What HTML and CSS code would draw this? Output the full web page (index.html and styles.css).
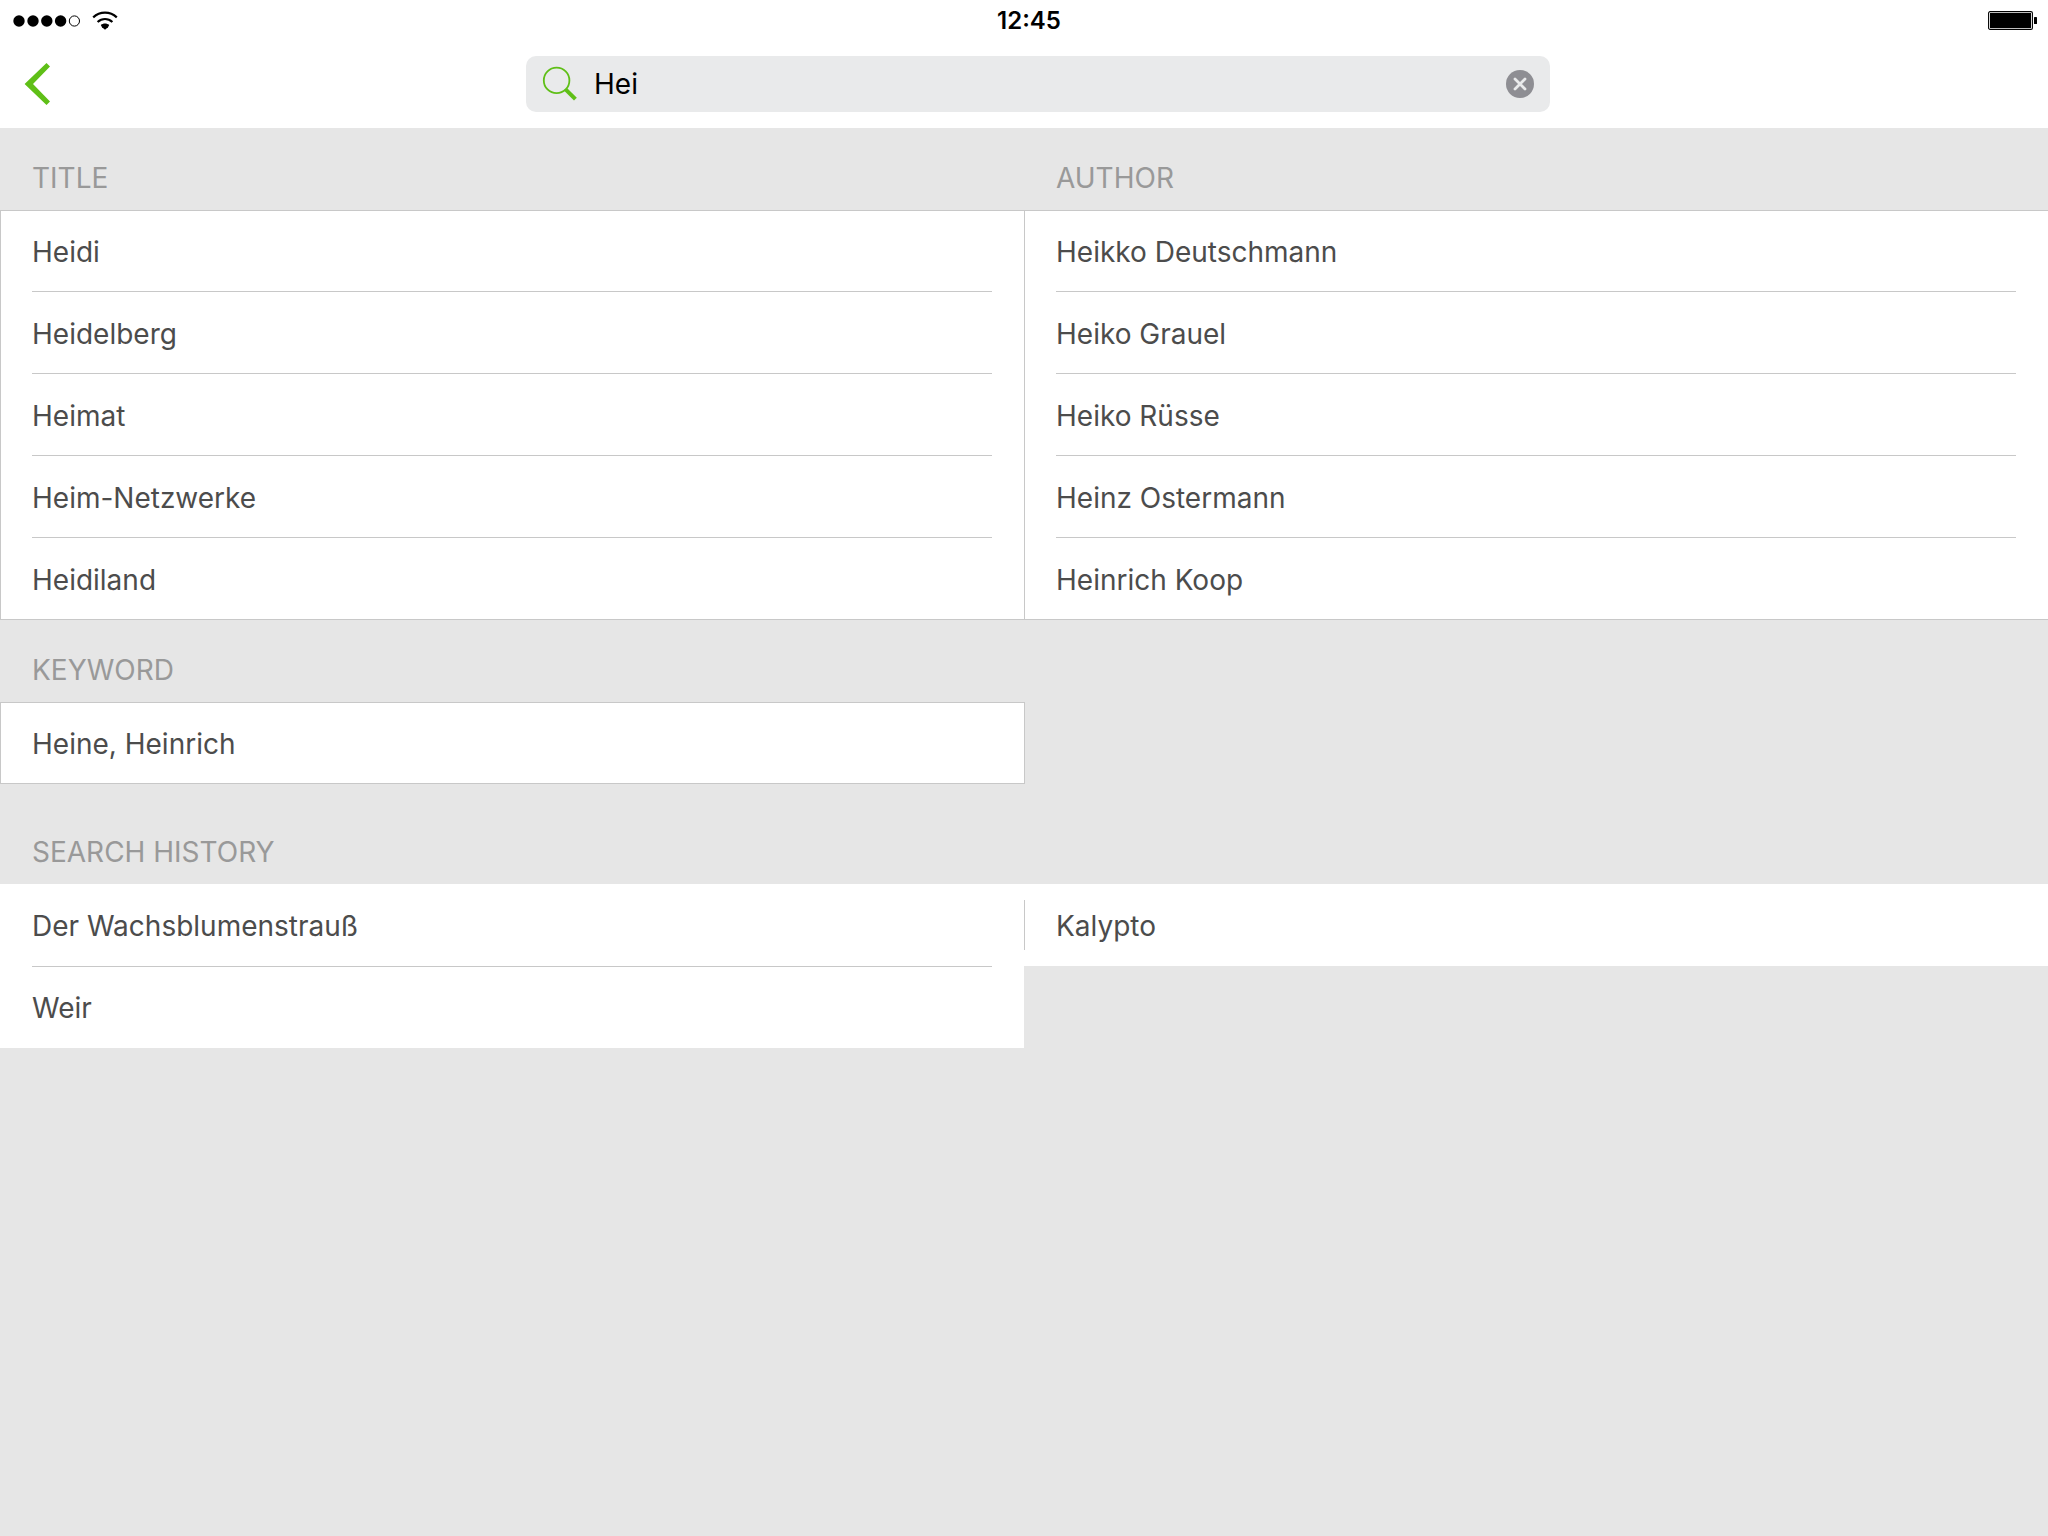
FILE: index.html
```html
<!DOCTYPE html>
<html lang="en">
<head>
<meta charset="utf-8">
<meta name="viewport" content="width=device-width, initial-scale=1">
<title>Search</title>
<link rel="stylesheet" href="styles.css">
</head>
<body>
<div class="status">
  <div class="status-left">
    <svg class="signal" width="70" height="12" viewBox="0 0 70 12" aria-label="Signal">
      <circle cx="7" cy="6" r="5.7"/><circle cx="21" cy="6" r="5.7"/><circle cx="34.8" cy="6" r="5.7"/><circle cx="48.6" cy="6" r="5.7"/>
      <circle cx="62.4" cy="6" r="5.1" fill="none" stroke="#000" stroke-width="1"/>
    </svg>
    <svg width="26" height="20" viewBox="0 0 26 20" aria-label="Wi-Fi">
      <path d="M1.2 6.4C8 .1 18 .1 24.8 6.4" fill="none" stroke="#000" stroke-width="2.2"/>
      <path d="M5.6 11C10 7 16 7 20.4 11" fill="none" stroke="#000" stroke-width="2.2"/>
      <path d="M8.8 14C11.2 12 14.8 12 17.2 14L16 16.2L13 18.8L10 16.2Z"/>
    </svg>
  </div>
  <time class="clock">12:45</time>
  <div class="status-right">
    <svg width="50" height="20" viewBox="0 0 50 20" aria-label="Battery">
      <rect x=".6" y=".6" width="43.8" height="17.8" rx="1.5" fill="#fff" stroke="#000" stroke-width="1.1"/>
      <rect x="2" y="2" width="41" height="15"/>
      <rect x="46" y="6" width="3" height="7" rx=".6"/>
    </svg>
  </div>
</div>
<header class="bar">
  <button class="back" type="button" aria-label="Back">
    <svg width="28" height="44" viewBox="0 0 28 44"><path d="M22.5 1L26 4.5L9 22L26 39.5L22.5 43L.6 22Z" fill="#5fbf17"/></svg>
  </button>
  <form class="search" role="search">
    <label for="query" aria-label="Search">
      <svg width="36" height="36" viewBox="0 0 36 36" fill="none" stroke="#5fbf17"><circle cx="14.6" cy="14.4" r="12.8" stroke-width="1.8"/><path d="M23.6 23.4L33.4 33.2" stroke-width="4"/></svg>
    </label>
    <input id="query" type="text" value="Hei">
    <button class="clear" type="button" aria-label="Clear">
      <svg width="28" height="28" viewBox="0 0 28 28"><circle cx="14" cy="14" r="14" fill="#8e8e93"/><path d="M9 9L19 19M19 9L9 19" stroke="#e9eaeb" stroke-width="2.8" stroke-linecap="round"/></svg>
    </button>
  </form>
</header>
<main>
  <div class="results">
    <section>
      <h2>TITLE</h2>
      <ul class="group">
        <li><a href="#">Heidi</a></li>
        <li><a href="#">Heidelberg</a></li>
        <li><a href="#">Heimat</a></li>
        <li><a href="#">Heim-Netzwerke</a></li>
        <li><a href="#">Heidiland</a></li>
      </ul>
    </section>
    <section>
      <h2>AUTHOR</h2>
      <ul class="group">
        <li><a href="#">Heikko Deutschmann</a></li>
        <li><a href="#">Heiko Grauel</a></li>
        <li><a href="#">Heiko Rüsse</a></li>
        <li><a href="#">Heinz Ostermann</a></li>
        <li><a href="#">Heinrich Koop</a></li>
      </ul>
    </section>
    <section>
      <h2>KEYWORD</h2>
      <ul class="group">
        <li><a href="#">Heine, Heinrich</a></li>
      </ul>
    </section>
  </div>
  <section class="recent">
    <h2>SEARCH HISTORY</h2>
    <ul class="history">
      <li><a href="#">Der Wachsblumenstrauß</a></li>
      <li><a href="#">Kalypto</a></li>
      <li><a href="#">Weir</a></li>
    </ul>
  </section>
</main>
</body>
</html>
```
FILE: styles.css
```css
* {
  box-sizing: border-box;
}

body {
  margin: 0;
  min-height: 100vh;
  overflow-x: hidden;
  background: #e6e6e6;
  color: #4c4c4c;
  font-family: Inter, "Liberation Sans", sans-serif;
  font-size: 28px;
  line-height: 34px;
}

svg {
  display: block;
}

button {
  padding: 0;
  border: 0;
  background: none;
  cursor: pointer;
}

ul {
  margin: 0;
  padding: 0;
  list-style: none;
}

/* Status bar */
.status {
  display: grid;
  grid-template-columns: 1fr auto 1fr;
  align-items: center;
  height: 40px;
  padding: 1px 10px 0 12px;
  background: #fff;
  color: #000;
}

.status-left {
  display: flex;
  align-items: center;
  gap: 10px;
}

.status-right {
  display: flex;
  justify-content: flex-end;
}

.clock {
  padding-left: 8px;
  font-size: 24px;
  font-weight: 600;
}

/* Search bar */
.bar {
  display: grid;
  grid-template-columns: 28px 1fr 50vw 1fr;
  align-items: center;
  height: 88px;
  background: #fff;
}

.back {
  grid-column: 1 / 3;
  justify-self: start;
  padding-left: 24px;
}

.search {
  display: flex;
  align-items: center;
  gap: 16px;
  height: 56px;
  padding: 0 16px;
  border-radius: 10px;
  background: #e9eaeb;
}

.search input {
  flex: 1;
  min-width: 0;
  padding: 0;
  border: 0;
  outline: 0;
  background: none;
  color: #000;
  font: inherit;
}

/* Result groups */
.results {
  display: grid;
  grid-template-columns: 1fr 1fr;
}

h2 {
  margin: 0;
  padding: 33px 32px 15px;
  color: #999;
  font-size: 28px;
  font-weight: 400;
  line-height: 34px;
}

.group {
  margin-right: -1px;
  padding: 0 33px 0 32px;
  background: #fff;
  box-shadow: inset 0 0 0 1px #c8c8c8;
}

.group li + li {
  box-shadow: 0 -1px #c8c8c8;
}

li a {
  display: block;
  padding: 25px 0 23px;
  color: inherit;
  text-decoration: none;
}

/* Search history */
.recent {
  padding-top: 18px;
}

.history {
  display: grid;
  grid-template-columns: 1fr 1fr;
}

.history li {
  padding: 0 32px;
  background: #fff;
}

.history li:nth-child(even) {
  background: linear-gradient(#c8c8c8, #c8c8c8) left center / 1px 50px no-repeat #fff;
}

.history li:nth-child(n + 3) a {
  box-shadow: inset 0 1px #c8c8c8;
}
```
